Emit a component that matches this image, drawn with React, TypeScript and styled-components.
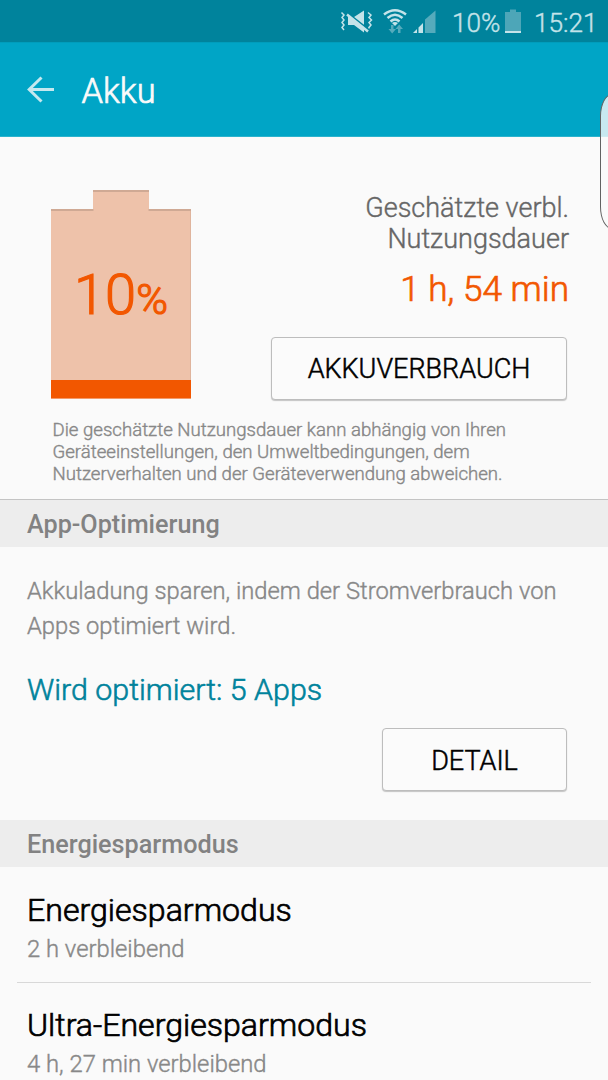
import React from "react";
import styled, { createGlobalStyle } from "styled-components";

const GlobalStyle = createGlobalStyle`
  * { box-sizing: border-box; }
  html, body { margin: 0; padding: 0; background: #fafafa; }
  body { overflow: hidden; }
`;

const Screen = styled.div`
  position: relative;
  width: 608px;
  height: 1080px;
  overflow: hidden;
  display: flex;
  flex-direction: column;
  background: #fafafa;
  color: #000;
  font-family: Roboto, "Liberation Sans", sans-serif;
  font-weight: 300;
  -webkit-text-stroke-width: 0.4px;
`;

const StatusBar = styled.header`
  flex: none;
  display: flex;
  align-items: center;
  justify-content: flex-end;
  height: 42px;
  padding: 3px 12px 0 0;
  background: #00839c;
  color: #c4e3e9;
`;

const StatusIcons = styled.svg`
  display: block;
  flex: none;
  margin-top: -3px;
`;

const StatusText = styled.span<{ $width: number }>`
  width: ${(p) => p.$width}px;
  font-size: 26.2px;
  line-height: 38px;
  white-space: nowrap;
`;

const AppBar = styled.div`
  flex: none;
  display: flex;
  align-items: center;
  height: 95px;
  padding: 0 0 0 27px;
  background: #00a5c6;
  border-top: 1px solid #009dbc;
  border-bottom: 1px solid #2bb3cd;
`;

const AppTitle = styled.h1`
  margin: 3px 0 0 26.5px;
  color: #fafafa;
  font-size: 34.4px;
  font-weight: 300;
  line-height: 42px;
  -webkit-text-stroke-width: 0.7px;
`;

const Summary = styled.section`
  flex: none;
  height: 362px;
  padding: 52px 41px 0 51px;
`;

const SummaryTop = styled.div`
  display: flex;
  justify-content: space-between;
  height: 211px;
`;

const BatteryBox = styled.div`
  position: relative;
  width: 141px;
  height: 211px;
`;

const Level = styled.div`
  position: absolute;
  inset: 73px 0 auto 23px;
  color: #f25700;
  font-size: 56px;
  line-height: 66px;
  white-space: nowrap;
  -webkit-text-stroke-width: 1.2px;
`;

const LevelUnit = styled.span`
  font-size: 43px;
`;

const Estimate = styled.div`
  display: flex;
  flex-direction: column;
  align-items: flex-end;
  padding-top: 4px;
`;

const EstimateLabel = styled.p`
  margin: 0 -2px 0 0;
  color: #666;
  font-size: 27px;
  line-height: 31px;
  text-align: right;
`;

const EstimateValue = styled.p`
  margin: 14px -2px 0 0;
  color: #f25700;
  font-size: 35.2px;
  line-height: 40px;
  -webkit-text-stroke-width: 0.7px;
`;

const OutlineButton = styled.button<{ $width: number }>`
  flex: none;
  width: ${(p) => p.$width}px;
  height: 63px;
  padding: 2px 0 0;
  border: 1.5px solid #bdbdbd;
  border-radius: 4px;
  box-shadow: 0 1px 1px #c4c4c4;
  background: #fbfbfb;
  color: #000;
  font: 300 27px/32px Roboto, "Liberation Sans", sans-serif;
  -webkit-text-stroke-width: 0.5px;
  text-align: center;
`;

const UsageSlot = styled.div`
  margin-top: 27.5px;
`;

const Disclaimer = styled.p`
  margin: 19px 0 0 1.5px;
  color: #888;
  font-size: 18.6px;
  line-height: 22px;
  white-space: nowrap;
`;

const SectionTitle = styled.h2<{ $ruled?: boolean }>`
  flex: none;
  height: ${(p) => (p.$ruled ? 48 : 47)}px;
  margin: 0;
  padding: 0 0 0 27px;
  border-top: ${(p) => (p.$ruled ? "1px solid #c4c4c4" : "0")};
  background: #ededed;
  color: #828282;
  font-size: 25.2px;
  font-weight: 500;
  line-height: 49px;
  -webkit-text-stroke-width: 0;
`;

const Optimization = styled.section`
  flex: none;
  display: flex;
  flex-direction: column;
  height: 273px;
  padding: 27px 41px 0 27px;
`;

const Description = styled.p`
  margin: 0;
  color: #888;
  font-size: 23.75px;
  line-height: 35px;
  white-space: nowrap;
`;

const OptimizedCount = styled.p`
  margin: 28px 0 20px;
  color: #00839c;
  font-size: 30.4px;
  line-height: 36px;
  -webkit-text-stroke-width: 0.6px;
`;

const Actions = styled.div`
  display: flex;
  justify-content: flex-end;
`;

const ModeRow = styled.div<{ $divided?: boolean }>`
  flex: none;
  height: 116px;
  margin: 0 17px;
  padding: ${(p) => (p.$divided ? 23 : 22)}px 10px 0;
  border-bottom: ${(p) => (p.$divided ? "1px solid #d8d8d8" : "0")};
`;

const ModeName = styled.div`
  font-size: 32.1px;
  line-height: 40px;
  -webkit-text-stroke-width: 0.7px;
`;

const ModeTime = styled.div`
  margin-top: 3px;
  color: #888;
  font-size: 23.8px;
  line-height: 32px;
`;

const EdgeHandle = styled.div`
  position: absolute;
  top: 94px;
  left: 600px;
  width: 24px;
  height: 135px;
  border: 1px solid #626262;
  border-radius: 13px / 24px;
  background: rgba(250, 250, 250, 0.8);
`;

const Battery = () => (
  <BatteryBox>
    <svg width="141" height="211" viewBox="0 0 141 211">
      <path d="M0 20H42V1H98V20H140V209.500H0Z" fill="#eec2aa" />
      <path d="M0 21H42.5M42 2H98M97.5 21H140" fill="none" stroke="#cfa994" strokeWidth="2" />
      <path d="M139.5 22V191" stroke="#dfb49d" />
      <rect y="191" width="140" height="18.500" fill="#f25700" />
    </svg>
    <Level>
      10<LevelUnit>%</LevelUnit>
    </Level>
  </BatteryBox>
);

export default function App() {
  return (
    <>
      <GlobalStyle />
      <Screen>
        <StatusBar>
          <StatusIcons width="112" height="42" viewBox="340 0 112 42">
            <g fill="none" stroke="#c4e3e9" strokeWidth="1.5">
              <path d="M341.5 12.5l2.500 2.5-2 2.5 2 2.5-2 2.5 2 2.5-2 2.5 2 2.5" />
              <path d="M368 12.5l3 2.5-2 2.5 2.500 2.5-2.500 2.5 2 2.5-2 2.5-1 2.5" />
            </g>
            <path d="M348 17h6l10-6.500v22l-10-7.500h-6z" fill="#c4e3e9" />
            <path d="M347.500 13L369 30" stroke="#00839c" strokeWidth="2" />
            <path d="M347 14.500L368 31.500" stroke="#c4e3e9" strokeWidth="2.500" />
            <g fill="none" stroke="#c4e3e9" strokeWidth="2.500">
              <path d="M384 14.500Q395 6 406 14.500" />
              <path d="M387.500 18Q395 11.500 402.500 18" />
              <path d="M390.500 21.500Q395 17.500 399.500 21.500" />
            </g>
            <path d="M392 23Q395 21 398 23L395 26Z" fill="#c4e3e9" />
            <g fill="#55abbc">
              <path d="M391 25h2.500v4h2.500l-3.800 4.500L388.500 29H391z" />
              <path d="M398 33h2.500v-4h2.500l-3.800-4.500L395.500 29H398z" />
              <path d="M425 19.500L435.500 10.500V33H425z" />
            </g>
            <path d="M413 33l4-4V33zM418.500 27.500l4.500-4.500V33h-4.500z" fill="#c4e3e9" />
          </StatusIcons>
          <StatusText $width={53}>10%</StatusText>
          <StatusIcons width="29" height="42" viewBox="505 0 29 42">
            <path d="M505 12h5V9.500h6V12h5V31h-16z" fill="#4da6b8" />
            <rect x="505" y="31" width="16" height="2" fill="#c4e3e9" />
          </StatusIcons>
          <StatusText $width={62}>15:21</StatusText>
        </StatusBar>

        <AppBar>
          <svg width="28" height="28" viewBox="0 0 28 28" fill="none" stroke="#c5e8ef" strokeWidth="3">
            <path d="M14.500 1.500L2.200 13.500L14.500 25.500M2.200 13.500H27" />
          </svg>
          <AppTitle>Akku</AppTitle>
        </AppBar>

        <Summary>
          <SummaryTop>
            <Battery />
            <Estimate>
              <EstimateLabel>
                Geschätzte verbl.
                <br />
                Nutzungsdauer
              </EstimateLabel>
              <EstimateValue>1 h, 54 min</EstimateValue>
              <UsageSlot>
                <OutlineButton $width={296}>AKKUVERBRAUCH</OutlineButton>
              </UsageSlot>
            </Estimate>
          </SummaryTop>
          <Disclaimer>
            Die geschätzte Nutzungsdauer kann abhängig von Ihren
            <br />
            Geräteeinstellungen, den Umweltbedingungen, dem
            <br />
            Nutzerverhalten und der Geräteverwendung abweichen.
          </Disclaimer>
        </Summary>

        <SectionTitle $ruled>App-Optimierung</SectionTitle>
        <Optimization>
          <Description>
            Akkuladung sparen, indem der Stromverbrauch von
            <br />
            Apps optimiert wird.
          </Description>
          <OptimizedCount>Wird optimiert: 5 Apps</OptimizedCount>
          <Actions>
            <OutlineButton $width={185}>DETAIL</OutlineButton>
          </Actions>
        </Optimization>

        <SectionTitle>Energiesparmodus</SectionTitle>
        <ModeRow $divided>
          <ModeName>Energiesparmodus</ModeName>
          <ModeTime>2 h verbleibend</ModeTime>
        </ModeRow>
        <ModeRow>
          <ModeName>Ultra-Energiesparmodus</ModeName>
          <ModeTime>4 h, 27 min verbleibend</ModeTime>
        </ModeRow>

        <EdgeHandle />
      </Screen>
    </>
  );
}
